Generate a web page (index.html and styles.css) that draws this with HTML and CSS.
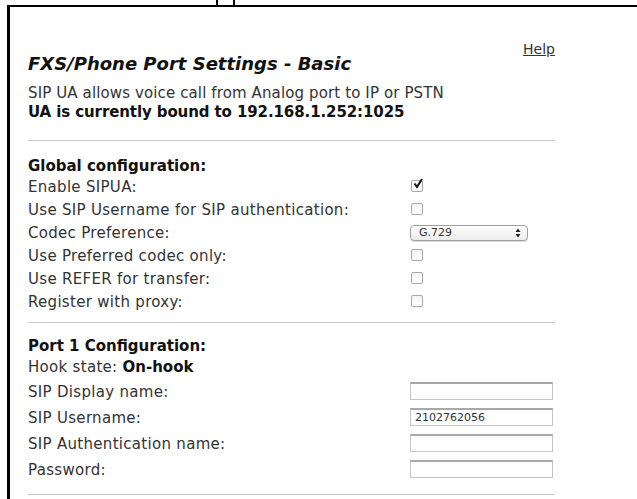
FILE: index.html
```html
<!DOCTYPE html>
<html>
<head>
<meta charset="utf-8">
<title>FXS/Phone Port Settings - Basic</title>
<link rel="stylesheet" href="styles.css">
</head>
<body>
<div class="tabstrip"><div class="tab"></div></div>
<div class="frame">
  <div class="page">
    <div class="header">
      <h1 class="title">FXS/Phone Port Settings - Basic</h1>
      <a class="help" href="#">Help</a>
    </div>
    <p class="intro">SIP UA allows voice call from Analog port to IP or PSTN</p>
    <p class="bound">UA is currently bound to 192.168.1.252:1025</p>
    <hr class="rule rule-top">

    <h2 class="section-title">Global configuration:</h2>
    <div class="rows">
      <label class="row"><span class="label">Enable SIPUA:</span><span class="check checked"><svg viewBox="0 0 12 12" width="12" height="12"><path d="M2.5 5.5 L5 9 L10 1" fill="none" stroke="#111" stroke-width="2"/></svg></span></label>
      <label class="row"><span class="label">Use SIP Username for SIP authentication:</span><span class="check"></span></label>
      <label class="row"><span class="label">Codec Preference:</span><span class="select">G.729<svg class="arrows" viewBox="0 0 6 10" width="6" height="10"><path d="M3 0.5 L5.5 4 H0.5 Z M3 9.5 L5.5 6 H0.5 Z" fill="#222"/></svg></span></label>
      <label class="row"><span class="label">Use Preferred codec only:</span><span class="check"></span></label>
      <label class="row"><span class="label">Use REFER for transfer:</span><span class="check"></span></label>
      <label class="row"><span class="label">Register with proxy:</span><span class="check"></span></label>
    </div>
    <hr class="rule rule-mid">

    <h2 class="section-title port-title">Port 1 Configuration:</h2>
    <div class="hook">Hook state: <b>On-hook</b></div>
    <div class="rows fields">
      <label class="row field"><span class="label">SIP Display name:</span><span class="input"></span></label>
      <label class="row field"><span class="label">SIP Username:</span><span class="input">2102762056</span></label>
      <label class="row field"><span class="label">SIP Authentication name:</span><span class="input"></span></label>
      <label class="row field"><span class="label">Password:</span><span class="input"></span></label>
    </div>
    <hr class="rule rule-end">
  </div>
</div>
</body>
</html>
```
FILE: styles.css
```css
html, body {
  margin: 0;
  padding: 0;
  background: #fff;
}

body {
  font-family: "DejaVu Sans", Verdana, sans-serif;
  color: #2a2a2a;
  height: 499px;
  overflow: hidden;
}

/* bottom edge of the tab above the frame */
.tabstrip {
  height: 5px;
  padding-left: 216px;
}

.tab {
  width: 15px;
  height: 5px;
  border-left: 2px solid #000;
  border-right: 2px solid #000;
}

.frame {
  margin-left: 7px;
  border-top: 2px solid #000;
  border-left: 3px solid #000;
  height: 500px;
  padding-left: 18px;
}

.page {
  width: 527px;
  padding-top: 34px;
}

.header {
  display: flex;
  justify-content: space-between;
  align-items: flex-start;
}

.title {
  margin: 12px 0 0;
  font-size: 18px;
  font-weight: bold;
  font-style: italic;
  line-height: 22px;
  color: #111;
}

.help {
  font-size: 14px;
  line-height: 17px;
  color: #333;
  text-decoration: underline;
}

.intro, .bound {
  margin: 0;
  font-size: 15px;
  line-height: 19px;
}

.intro {
  margin-top: 9px;
  color: #333;
  letter-spacing: 0.12px;
}

.bound {
  font-weight: bold;
  color: #111;
  letter-spacing: -0.1px;
}

.rule {
  border: 0;
  border-top: 1px solid #c8c8c8;
  height: 0;
  margin: 0;
}

.rule-top {
  margin-top: 18px;
}

.section-title {
  margin: 15px 0 0;
  font-size: 15px;
  font-weight: bold;
  line-height: 20px;
  color: #111;
}

.port-title {
  margin-top: 13px;
}

.rows {
  display: flex;
  flex-direction: column;
}

.row {
  display: grid;
  grid-template-columns: 382px 1fr;
  align-items: center;
  height: 23px;
  font-size: 15px;
  color: #333;
}

.label {
  line-height: 19px;
  letter-spacing: 0.3px;
}

.check {
  width: 10px;
  height: 10px;
  margin-left: 1px;
  margin-top: -3px;
  border: 1px solid #a8a8a8;
  border-radius: 2px;
  background: linear-gradient(#f4f4f4, #fff);
  position: relative;
}

.check.checked svg {
  position: absolute;
  left: 0;
  top: -3px;
}

.select {
  width: 102px;
  height: 14px;
  margin-top: -1px;
  border: 1px solid #a0a0a0;
  border-radius: 4px;
  background: linear-gradient(#fff, #ececec);
  box-shadow: 0 1px 1px rgba(0, 0, 0, 0.15);
  font-size: 11px;
  line-height: 14px;
  padding: 0 6px 0 8px;
  display: flex;
  justify-content: space-between;
  align-items: center;
  color: #333;
}

.rule-mid {
  margin-top: 8px;
}

.hook {
  font-size: 15px;
  line-height: 23px;
  color: #333;
  letter-spacing: 0.3px;
}

.hook b {
  color: #111;
  letter-spacing: 0;
}

.row.field {
  height: 26px;
}

.input {
  width: 133px;
  height: 15px;
  margin-top: -2px;
  border: 1px solid #c4c4c4;
  border-top: 2px solid #a8a8a8;
  font-size: 11px;
  line-height: 15px;
  padding: 0 4px;
  color: #333;
  box-sizing: content-box;
}

.rule-end {
  margin-top: 11px;
}
```
